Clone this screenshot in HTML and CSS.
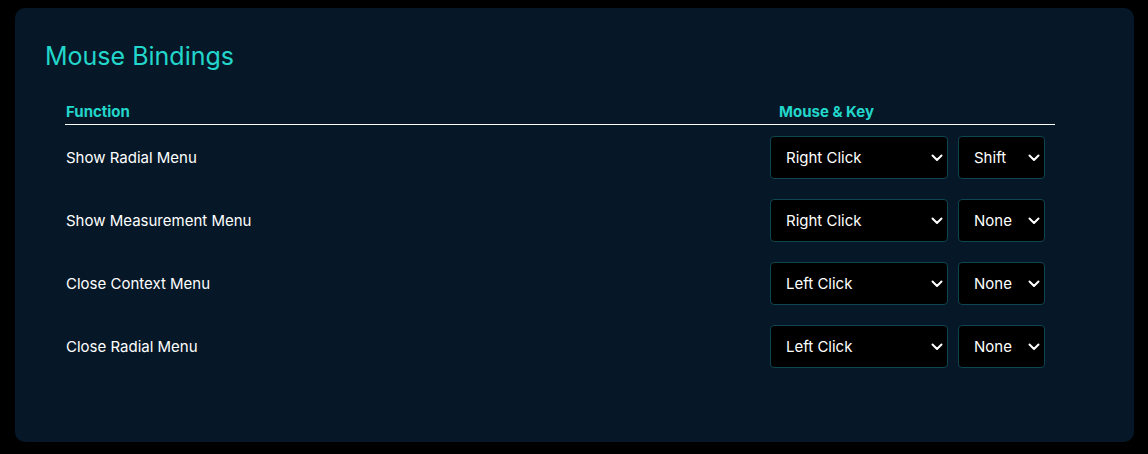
FILE: index.html
```html
<!DOCTYPE html>
<html lang="en">
<head>
    <meta charset="UTF-8">
    <meta name="viewport" content="width=device-width, initial-scale=1.0">
    <title>Mouse Bindings</title>
    <link rel="stylesheet" href="styles.css">
</head>
<body>
    <div class="panel">
        <h2>Mouse Bindings</h2>

        <div class="bindings">
            <div class="head">
                <div>Function</div>
                <div class="head-key">Mouse &amp; Key</div>
            </div>

            <div class="row">
                <div class="label">Show Radial Menu</div>
                <div class="picks">
                    <div class="pick wide">
                        <select><option>Right Click</option><option>Left Click</option><option>Middle Click</option></select>
                        <svg class="chev" viewBox="0 0 12 8"><path d="M1.5 1.5 6 6l4.5-4.5" /></svg>
                    </div>
                    <div class="pick narrow">
                        <select><option>Shift</option><option>None</option><option>Ctrl</option><option>Alt</option></select>
                        <svg class="chev" viewBox="0 0 12 8"><path d="M1.5 1.5 6 6l4.5-4.5" /></svg>
                    </div>
                </div>
            </div>

            <div class="row">
                <div class="label">Show Measurement Menu</div>
                <div class="picks">
                    <div class="pick wide">
                        <select><option>Right Click</option><option>Left Click</option><option>Middle Click</option></select>
                        <svg class="chev" viewBox="0 0 12 8"><path d="M1.5 1.5 6 6l4.5-4.5" /></svg>
                    </div>
                    <div class="pick narrow">
                        <select><option>None</option><option>Shift</option><option>Ctrl</option><option>Alt</option></select>
                        <svg class="chev" viewBox="0 0 12 8"><path d="M1.5 1.5 6 6l4.5-4.5" /></svg>
                    </div>
                </div>
            </div>

            <div class="row">
                <div class="label">Close Context Menu</div>
                <div class="picks">
                    <div class="pick wide">
                        <select><option>Left Click</option><option>Right Click</option><option>Middle Click</option></select>
                        <svg class="chev" viewBox="0 0 12 8"><path d="M1.5 1.5 6 6l4.5-4.5" /></svg>
                    </div>
                    <div class="pick narrow">
                        <select><option>None</option><option>Shift</option><option>Ctrl</option><option>Alt</option></select>
                        <svg class="chev" viewBox="0 0 12 8"><path d="M1.5 1.5 6 6l4.5-4.5" /></svg>
                    </div>
                </div>
            </div>

            <div class="row">
                <div class="label">Close Radial Menu</div>
                <div class="picks">
                    <div class="pick wide">
                        <select><option>Left Click</option><option>Right Click</option><option>Middle Click</option></select>
                        <svg class="chev" viewBox="0 0 12 8"><path d="M1.5 1.5 6 6l4.5-4.5" /></svg>
                    </div>
                    <div class="pick narrow">
                        <select><option>None</option><option>Shift</option><option>Ctrl</option><option>Alt</option></select>
                        <svg class="chev" viewBox="0 0 12 8"><path d="M1.5 1.5 6 6l4.5-4.5" /></svg>
                    </div>
                </div>
            </div>
        </div>
    </div>
</body>
</html>
```

FILE: styles.css
```css
body {
    margin: 0;
    padding: 8px 14px 12px 15px;
    background-color: #000;
    color: #fff;
    font-family: 'Inter', 'Liberation Sans', sans-serif;
}

.panel {
    height: 434px;
    box-sizing: border-box;
    background-color: #061828;
    border-radius: 10px;
    padding: 30px 30px 30px 30px;
}

h2 {
    margin: 0 0 28px 0;
    font-size: 25px;
    font-weight: 400;
    line-height: 36px;
    color: #22d6cb;
}

.bindings {
    width: 990px;
    margin-left: 20px;
}

.head {
    display: grid;
    grid-template-columns: 1fr 285px;
    border-bottom: 1px solid #fff;
    padding: 0 0 2px 1px;
    font-size: 15px;
    font-weight: 700;
    line-height: 20px;
    color: #22d6cb;
}

.head-key {
    padding-left: 9px;
}

.row {
    display: flex;
    align-items: center;
    padding: 11px 10px 9px 1px;
}

.label {
    flex: 1;
    font-size: 15px;
}

.picks {
    display: flex;
    gap: 10px;
}

.pick {
    position: relative;
}

.pick select {
    appearance: none;
    -webkit-appearance: none;
    height: 43px;
    box-sizing: border-box;
    background-color: #000;
    color: #fff;
    border: 1px solid #0d4550;
    border-radius: 4px;
    padding: 0 15px;
    font-family: 'Inter', 'Liberation Sans', sans-serif;
    font-size: 15px;
}

.pick.wide select {
    width: 178px;
}

.pick.narrow select {
    width: 87px;
}

.chev {
    position: absolute;
    right: 5px;
    top: 18px;
    width: 12px;
    height: 8px;
    pointer-events: none;
}

.chev path {
    fill: none;
    stroke: #fff;
    stroke-width: 2;
    stroke-linecap: round;
    stroke-linejoin: round;
}
```
